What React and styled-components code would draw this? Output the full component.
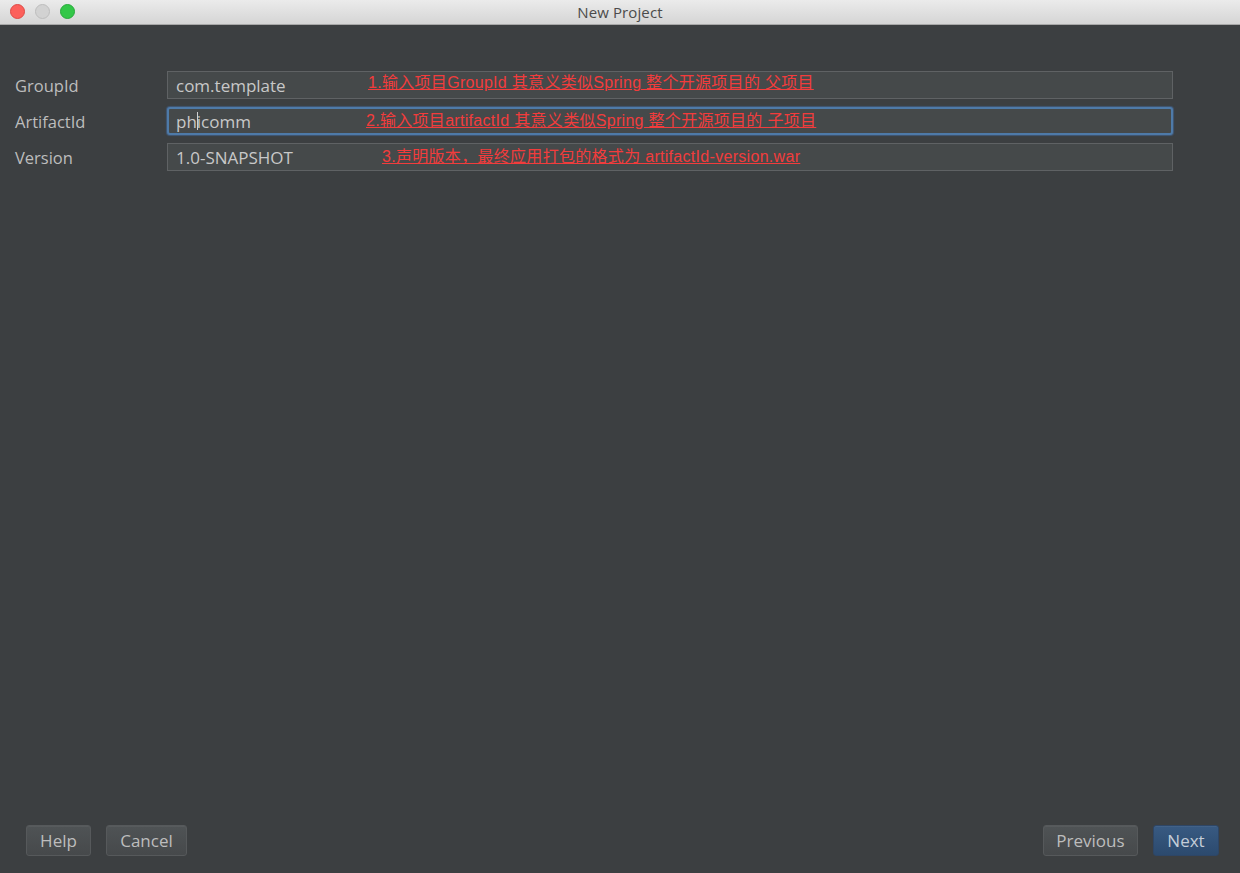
import React from "react";
import styled, { createGlobalStyle } from "styled-components";

const Global = createGlobalStyle`
  html, body { margin: 0; padding: 0; background: #3c3f41; }
  body { font-family: "Open Sans", "Liberation Sans", sans-serif; }
  #root { width: 1240px; height: 873px; }
  * { box-sizing: border-box; }
`;

const Window = styled.div`
  width: 1240px;
  height: 873px;
  display: flex;
  flex-direction: column;
  background: #3c3f41;
  overflow: hidden;
`;

const TitleBar = styled.div`
  height: 25px;
  flex: none;
  position: relative;
  display: flex;
  align-items: center;
  justify-content: center;
  background: linear-gradient(#ebebeb, #d5d5d5);
  border-bottom: 1px solid #a8a8a8;
`;

const Lights = styled.div`
  position: absolute;
  left: 10px;
  top: 4px;
  display: flex;
  gap: 10px;
`;

const Light = styled.span`
  width: 15px;
  height: 15px;
  border-radius: 50%;
  background: ${(p) => p.$color};
  border: 1px solid ${(p) => p.$edge};
`;

const Title = styled.div`
  font-size: 15px;
  color: #4b4b4b;
  letter-spacing: 0.1px;
`;

const Body = styled.div`
  flex: 1;
  display: flex;
  flex-direction: column;
  justify-content: space-between;
  padding: 46px 67px 17px 15px;
`;

const Form = styled.div`
  display: grid;
  grid-template-columns: 152px 1fr;
  grid-auto-rows: 28px;
  row-gap: 8px;
`;

const Label = styled.div`
  display: flex;
  align-items: center;
  font-size: 16.5px;
  color: #bdbdbd;
`;

const Field = styled.div`
  position: relative;
  display: flex;
  align-items: center;
  padding-left: 8px;
  font-size: 17px;
  color: #c8c8c8;
  background: #45494a;
  border: 1px solid #5f6264;
  ${(p) =>
    p.$focused &&
    `
    border: 2px solid #4e7aa8;
    border-radius: 3px;
    padding-left: 7px;
    box-shadow: 0 0 1px 1px rgba(70,110,160,0.55);
  `}
`;

const Caret = styled.span`
  display: inline-block;
  width: 1px;
  height: 18px;
  margin-right: -1px;
  background: #d0d0d0;
  position: relative;
  z-index: 1;
`;

const Note = styled.span`
  position: absolute;
  left: ${(p) => p.$left}px;
  top: ${(p) => p.$top}px;
  font-family: "Liberation Sans", "Noto Sans CJK SC", sans-serif;
  font-size: 16px;
  line-height: 18px;
  letter-spacing: 0.3px;
  color: #f23c3c;
  text-decoration: underline;
  text-underline-offset: 1px;
  white-space: nowrap;
`;

const Footer = styled.div`
  display: flex;
  justify-content: space-between;
  padding-left: 11px;
  margin-right: -46px;
`;

const Group = styled.div`
  display: flex;
  gap: 15px;
`;

const Button = styled.button`
  height: 31px;
  width: ${(p) => p.$w}px;
  padding: 0;
  font-family: "Open Sans", "Liberation Sans", sans-serif;
  font-size: 17px;
  color: ${(p) => (p.$primary ? "#c4cdd8" : "#bdbdbd")};
  background: ${(p) =>
    p.$primary
      ? "linear-gradient(#385a82, #2c4a6e)"
      : "linear-gradient(#4f5355, #46494b)"};
  border: 1px solid ${(p) => (p.$primary ? "#2e4666" : "#56595b")};
  border-radius: 3px;
  box-shadow: inset 0 1px 0 rgba(255, 255, 255, 0.05);
`;

export default function App() {
  return (
    <>
      <Global />
      <Window>
        <TitleBar>
          <Lights>
            <Light $color="#fc605b" $edge="#de4a45" />
            <Light $color="#d2d2d2" $edge="#bdbdbd" />
            <Light $color="#33c748" $edge="#27aa3a" />
          </Lights>
          <Title>New Project</Title>
        </TitleBar>
        <Body>
          <Form>
            <Label>GroupId</Label>
            <Field>
              com.template
              <Note $left={200} $top={2}>
                1.输入项目GroupId 其意义类似Spring 整个开源项目的 父项目
              </Note>
            </Field>
            <Label>ArtifactId</Label>
            <Field $focused>
              ph<Caret />icomm
              <Note $left={197} $top={3}>
                2.输入项目artifactId 其意义类似Spring 整个开源项目的 子项目
              </Note>
            </Field>
            <Label>Version</Label>
            <Field>
              1.0-SNAPSHOT
              <Note $left={214} $top={4}>
                3.声明版本，最终应用打包的格式为 artifactId-version.war
              </Note>
            </Field>
          </Form>
          <Footer>
            <Group>
              <Button $w={65}>Help</Button>
              <Button $w={81}>Cancel</Button>
            </Group>
            <Group>
              <Button $w={95}>Previous</Button>
              <Button $w={66} $primary>
                Next
              </Button>
            </Group>
          </Footer>
        </Body>
      </Window>
    </>
  );
}
